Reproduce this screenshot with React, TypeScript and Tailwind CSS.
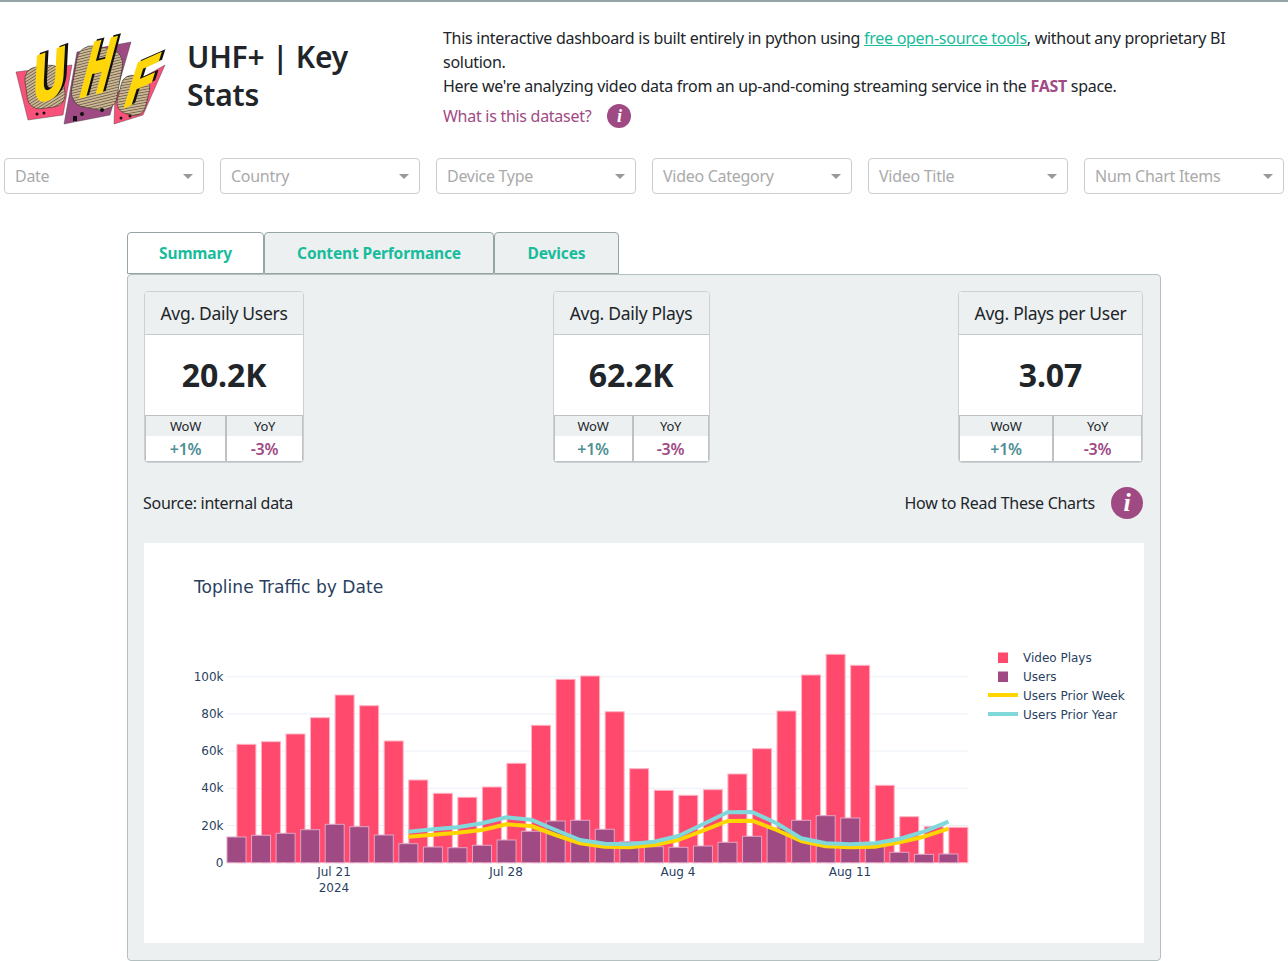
import React from "react";

const redTops = [744.3,741.7,734,717.7,695,705.7,741,780,793.3,797.3,787,763.3,725.3,679.3,676,711.7,768.7,790.3,795.3,789.7,774,748.7,711,675,654.3,665.3,785.3,816.7,826.7,827.3];
const purpleTops = [837,835.3,833.3,829.7,824.3,826.7,835,843.7,847,847.7,845.3,840,831.3,821,820.3,829.3,841.7,846.7,847.3,846,842.3,836.3,828,820.3,815.7,818,845,852.3,854.3,854];
const cyan = [831.7,829.3,827.3,823.3,817.3,819.7,830,840,843.7,844.3,841.7,836,824.3,812.3,812,823.3,838.3,843.3,844.3,843.3,839,831.7,821.7];
const yellow = [836.7,834.7,832.7,830,824.3,826,835,843.3,846.7,847.3,845,840,830.7,821,820.7,830,841,846.3,847.3,846.7,842.3,836.7,828.7];
const BASE = 862.7;
const STEP = 24.55;
const pts = (a: number[]) => a.map((y, i) => `${(236.5 + (i + 7) * STEP).toFixed(1)},${y}`).join(" ");

function Logo() {
  const letter = "[font-family:'Liberation_Sans',sans-serif] font-bold";
  const L = ({ t, x, y, sx, sy, kx, ky }: { t: string; x: number; y: number; sx: number; sy: number; kx: number; ky: number }) => (
    <g transform={`translate(${x} ${y}) skewY(${ky}) skewX(${kx}) scale(${sx} ${sy})`} className={letter} fontSize="60">
      <text x="4" y="-1" fill="#111" stroke="#111" strokeWidth="3.5" strokeLinejoin="miter">{t}</text>
      <text x="0" y="0" fill="#ffd60a" stroke="#ffd60a" strokeWidth="3" strokeLinejoin="miter">{t}</text>
    </g>
  );
  return (
    <svg width="170" height="110" viewBox="0 0 170 110" className="block shrink-0 overflow-visible">
      <defs>
        <pattern id="hatch" width="2.6" height="2.6" patternUnits="userSpaceOnUse" patternTransform="rotate(-24)">
          <rect width="2.6" height="2.6" fill="#cdb893" />
          <rect width="2.6" height="0.7" fill="#5a4f40" />
        </pattern>
      </defs>
      <polygon points="16,47 72,40 63,90 28,95" fill="#f9527a" stroke="#333" strokeWidth="0.4" />
      <polygon points="77,27 131,17 110,90 64,99" fill="#a04a84" stroke="#333" strokeWidth="0.4" />
      <polygon points="115,68 165,40 143,90 114,99" fill="#f9527a" stroke="#333" strokeWidth="0.4" />
      <rect x="26" y="41" width="38" height="42" rx="12" transform="rotate(-8 45 62)" fill="url(#hatch)" stroke="#222" strokeWidth="0.5" />
      <rect x="74" y="22" width="46" height="62" rx="15" transform="rotate(10 97 53)" fill="url(#hatch)" stroke="#222" strokeWidth="0.5" />
      <rect x="119" y="51" width="29" height="39" rx="11" transform="rotate(14 134 70)" fill="url(#hatch)" stroke="#222" strokeWidth="0.5" />
      <rect x="73" y="91" width="4" height="5" fill="#111" />
      <circle cx="82" cy="89" r="2" fill="#111" />
      <circle cx="102" cy="85" r="2" fill="#111" />
      <circle cx="37" cy="89" r="1.5" fill="#111" />
      <circle cx="44" cy="88" r="1.5" fill="#111" />
      <circle cx="121" cy="93" r="1.5" fill="#111" />
      <circle cx="130" cy="91" r="1.5" fill="#111" />
      <L t="U" x={33} y={79} sx={0.72} sy={1.1} kx={-3} ky={-20} />
      <L t="H" x={78} y={72} sx={0.62} sy={1.2} kx={-16} ky={-14} />
      <L t="F" x={122} y={83} sx={0.72} sy={0.9} kx={-20} ky={-24} />
    </svg>
  );
}

function Info({ size }: { size: "sm" | "lg" }) {
  return (
    <span
      className={
        size === "sm"
          ? "flex h-6 w-6 items-center justify-center rounded-full bg-[#a04a84] text-[18px] font-bold italic text-white [font-family:'Liberation_Serif',serif]"
          : "flex h-8 w-8 items-center justify-center rounded-full bg-[#a04a84] text-[26px] font-bold italic text-white [font-family:'Liberation_Serif',serif]"
      }
    >
      i
    </span>
  );
}

function Dropdown({ label }: { label: string }) {
  return (
    <div className="flex h-9 w-[200px] items-center justify-between rounded border border-[#ccc] bg-white pl-2.5 pr-[10px]">
      <span className="text-[#aaa]">{label}</span>
      <span className="h-0 w-0 border-x-[5px] border-t-[5px] border-x-transparent border-t-[#999]" />
    </div>
  );
}

function Kpi({ title, value, w, c1 }: { title: string; value: string; w: string; c1: string }) {
  return (
    <div className={`${w} overflow-hidden rounded-[4px] border border-[#ccd0d2] bg-white`}>
      <div className="flex h-[43px] items-center justify-center border-b border-[#c6cacb] bg-[#ecf0f1] text-[#212529]">
        <span className="text-[17.5px] tracking-[-0.3px]">{title}</span>
      </div>
      <div className="flex h-[80px] items-center justify-center text-[32px] font-bold tracking-[-0.1px] text-[#212529]">{value}</div>
      <div className="flex h-[47px] border border-[#bdc1c2] text-center">
        <div className={`${c1} border-r-2 border-[#bdc1c2]`}>
          <div className="flex h-[20px] items-center justify-center bg-[#ecf0f1] text-[13px] text-[#212529]">WoW</div>
          <div className="flex h-[25px] items-center justify-center text-[16px] font-semibold text-[#4f8f95]">+1%</div>
        </div>
        <div className="flex-1">
          <div className="flex h-[20px] items-center justify-center bg-[#ecf0f1] text-[13px] text-[#212529]">YoY</div>
          <div className="flex h-[25px] items-center justify-center text-[16px] font-semibold text-[#a04a84]">-3%</div>
        </div>
      </div>
    </div>
  );
}

function Chart() {
  const ink = "#2a3f5f";
  return (
    <svg viewBox="144 543 1000 400" className="block h-[400px] w-[1000px] [font-family:'DejaVu_Sans',sans-serif] tracking-normal">
      <text x="194" y="593" fontSize="17.1" fill={ink}>Topline Traffic by Date</text>
      {[20, 40, 60, 80, 100].map((k) => {
        const y = BASE - k * 1.86;
        return <line key={k} x1="227" x2="968" y1={y} y2={y} stroke="#ebf0f8" />;
      })}
      {[0, 20, 40, 60, 80, 100].map((k) => (
        <text key={k} x="223.5" y={BASE - k * 1.86 + 4} fontSize="12" textAnchor="end" fill={ink}>
          {k === 0 ? "0" : `${k}k`}
        </text>
      ))}
      {redTops.map((y, i) => (
        <rect key={i} x={236.9 + i * STEP} y={y} width={19} height={BASE - y} fill="#ff4a6e" stroke="#ffb3c4" strokeWidth="1" />
      ))}
      {purpleTops.map((y, i) => (
        <rect key={i} x={227 + i * STEP} y={y} width={19} height={BASE - y} fill="#a04a84" stroke="#e0a3c4" strokeWidth="1" />
      ))}
      <polyline points={pts(yellow)} fill="none" stroke="#ffd500" strokeWidth="4" strokeLinejoin="round" />
      <polyline points={pts(cyan)} fill="none" stroke="#80d8da" strokeWidth="4" strokeLinejoin="round" />
      {[["Jul 21", 334], ["Jul 28", 506], ["Aug 4", 678], ["Aug 11", 850]].map(([t, x]) => (
        <text key={t as string} x={x as number} y="876" fontSize="12" textAnchor="middle" fill={ink}>{t}</text>
      ))}
      <text x="334" y="892" fontSize="12" textAnchor="middle" fill={ink}>2024</text>
      <rect x="998" y="652.5" width="10" height="10.5" fill="#ff4a6e" />
      <rect x="998" y="671.5" width="10" height="10.5" fill="#a04a84" />
      <line x1="988" x2="1018" y1="695" y2="695" stroke="#ffd500" strokeWidth="4" />
      <line x1="988" x2="1018" y1="714" y2="714" stroke="#80d8da" strokeWidth="4" />
      {["Video Plays", "Users", "Users Prior Week", "Users Prior Year"].map((t, i) => (
        <text key={t} x="1023" y={662 + i * 19} fontSize="12" fill={ink}>{t}</text>
      ))}
    </svg>
  );
}

export default function App() {
  return (
    <div className="min-h-[961px] border-t-2 border-[#95a5a6] bg-white text-[16px] leading-6 tracking-[-0.28px] text-[#212529] [font-family:'Noto_Sans',sans-serif]">
      <div className="flex h-[156px]">
        <div className="w-[187px] pt-[23px]"><Logo /></div>
        <div className="w-[256px] pt-[36px] text-[30px] leading-[38px] font-semibold tracking-[-0.25px]">UHF+ | Key<br />Stats</div>
        <div className="flex-1 pt-6 pr-[56px]">
          <div>
            This interactive dashboard is built entirely in python using{" "}
            <span className="text-[#18bc9c] underline">free open-source tools</span>, without any proprietary BI solution.
          </div>
          <div>
            Here we're analyzing video data from an up-and-coming streaming service in the{" "}
            <span className="font-bold text-[#a04a84]">FAST</span> space.
          </div>
          <div className="mt-[6px] flex items-center gap-4 text-[#a04a84]">
            <span>What is this dataset?</span>
            <Info size="sm" />
          </div>
        </div>
      </div>
      <div className="flex gap-4 pl-1">
        {["Date", "Country", "Device Type", "Video Category", "Video Title", "Num Chart Items"].map((l) => (
          <Dropdown key={l} label={l} />
        ))}
      </div>
      <div className="ml-[127px] mt-[38px] w-[1034px]">
        <div className="flex text-[15.5px] font-bold tracking-[-0.15px] text-[#18bc9c]">
          <div className="flex h-[42px] w-[137px] items-center justify-center rounded-t border border-[#95a5a6] bg-white">Summary</div>
          <div className="flex h-[42px] w-[230px] items-center justify-center rounded-t border border-[#95a5a6] bg-[#ecf0f1]">Content Performance</div>
          <div className="flex h-[42px] w-[125px] items-center justify-center rounded-t border border-[#95a5a6] bg-[#ecf0f1]">Devices</div>
        </div>
        <div className="h-[687px] rounded border border-[#b4bfc0] bg-[#ecf0f1] px-4 pt-4">
          <div className="flex justify-between pr-px">
            <Kpi title="Avg. Daily Users" value="20.2K" w="w-[160px]" c1="w-[81px]" />
            <Kpi title="Avg. Daily Plays" value="62.2K" w="w-[157px]" c1="w-[79px]" />
            <Kpi title="Avg. Plays per User" value="3.07" w="w-[185px]" c1="w-[94px]" />
          </div>
          <div className="mt-[24px] flex h-8 items-center justify-between pr-px">
            <span className="-ml-px">Source: internal data</span>
            <div className="flex items-center gap-4"><span>How to Read These Charts</span><Info size="lg" /></div>
          </div>
          <div className="mt-6 bg-white"><Chart /></div>
        </div>
      </div>
    </div>
  );
}
